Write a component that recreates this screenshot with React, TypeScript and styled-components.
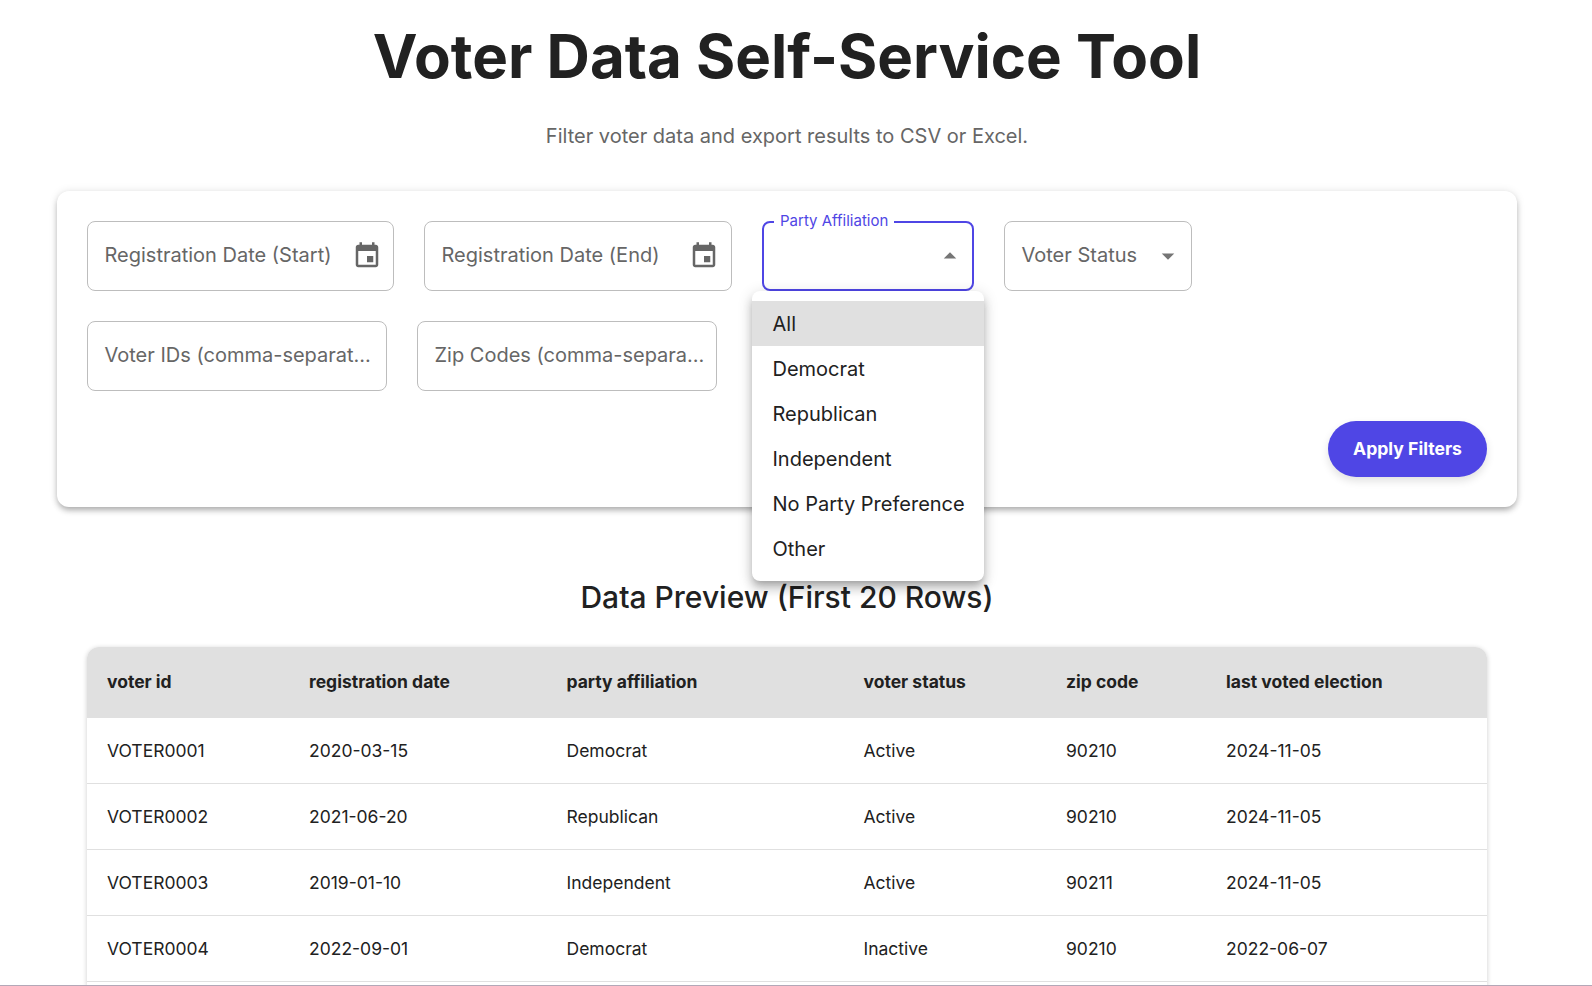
import * as React from 'react';
import styled, { createGlobalStyle } from 'styled-components';

const GlobalStyle = createGlobalStyle`
  html, body {
    margin: 0;
    height: 100%;
    overflow: hidden;
    background: #fff;
  }
  body {
    font-family: Inter, "Liberation Sans", sans-serif;
    color: #212121;
  }
`;

const Page = styled.div`
  width: 1574px;
  height: 986px;
  overflow: hidden;
  padding: 0 57px;
  box-sizing: border-box;
  display: flex;
  flex-direction: column;
`;

const Title = styled.h1`
  margin: 20px 0 0;
  font-size: 60px;
  line-height: 72px;
  font-weight: 700;
  text-align: center;
`;

const Subtitle = styled.p`
  margin: 30px 0 0;
  font-size: 20px;
  line-height: 28px;
  color: #666;
  text-align: center;
`;

const Card = styled.section`
  margin-top: 41px;
  padding: 30px;
  height: 316px;
  flex: none;
  box-sizing: border-box;
  background: #fff;
  border-radius: 12px;
  box-shadow: 0 4px 6px -1px rgba(0, 0, 0, 0.3), 0 0 8px rgba(0, 0, 0, 0.1);
  display: flex;
  flex-direction: column;
  justify-content: space-between;
`;

const Filters = styled.div`
  display: flex;
  flex-wrap: wrap;
  gap: 30px;
  width: 1150px;
`;

const Field = styled.div<{ $width: number; $focused?: boolean }>`
  position: relative;
  width: ${(p) => p.$width}px;
  height: 70px;
  box-sizing: border-box;
  padding: 0 ${(p) => (p.$focused ? 7 : 8)}px 2px 16.5px;
  display: flex;
  align-items: center;
  justify-content: space-between;
  border: ${(p) => (p.$focused ? '2px solid #4f46e5' : '1px solid #bdbdbd')};
  border-radius: 8px;
  font-size: 20px;
  color: #666;
  white-space: nowrap;

  svg {
    margin-top: 2px;
  }
`;

const DateField = styled(Field)<{ $iconInset: number }>`
  padding-right: ${(p) => p.$iconInset}px;
`;

const FloatingLabel = styled.span`
  position: absolute;
  left: 10px;
  top: -12px;
  padding: 0 6px;
  background: #fff;
  font-size: 15px;
  line-height: 20px;
  color: #4f46e5;
`;

const Menu = styled.ul`
  position: absolute;
  left: -12px;
  top: 68px;
  width: 232px;
  margin: 0;
  padding: 10px 0;
  list-style: none;
  background: #fff;
  border-radius: 8px;
  box-shadow: 0 5px 6px -3px rgba(0, 0, 0, 0.2), 0 8px 10px 1px rgba(0, 0, 0, 0.14), 0 3px 14px 2px rgba(0, 0, 0, 0.12);
  z-index: 5;
`;

const MenuItem = styled.li<{ $selected?: boolean }>`
  height: 45px;
  padding: 0 20.5px;
  display: flex;
  align-items: center;
  font-size: 20px;
  color: #212121;
  background: ${(p) => (p.$selected ? '#e0e0e0' : 'transparent')};
`;

const Actions = styled.div`
  display: flex;
  justify-content: flex-end;
`;

const ApplyButton = styled.button`
  height: 56px;
  width: 159px;
  padding: 0 0 2px;
  border: 0;
  border-radius: 28px;
  background: #4f46e5;
  color: #fff;
  font-family: inherit;
  font-size: 17.6px;
  font-weight: 700;
  box-shadow: 0 4px 8px rgba(0, 0, 0, 0.12);
`;

const SectionTitle = styled.h2`
  margin: 70px 0 0;
  font-size: 30px;
  line-height: 40px;
  font-weight: 500;
  text-align: center;
`;

const TableWrap = styled.div`
  flex: 1;
  margin: 30px 30px 0;
  background: #fff;
  border-radius: 12px 12px 0 0;
  overflow: hidden;
  box-shadow: 0 1px 5px rgba(0, 0, 0, 0.2);
`;

const Table = styled.table`
  width: 100%;
  border-collapse: collapse;
  table-layout: fixed;
`;

const HeadCell = styled.th`
  height: 71px;
  padding: 0 20px 2px;
  background: #e0e0e0;
  font-size: 17.5px;
  font-weight: 700;
  text-align: left;
  box-sizing: border-box;
`;

const Cell = styled.td`
  height: 65.8px;
  padding: 0 20px;
  font-size: 17.5px;
  border-bottom: 1px solid #e0e0e0;
  box-sizing: border-box;
`;

const BottomEdge = styled.div`
  position: fixed;
  left: 0;
  right: 0;
  bottom: 0;
  height: 1px;
  background: #b3a8b8;
`;

const CalendarIcon = () => (
  <svg width="30" height="30" viewBox="0 0 24 24" fill="#666">
    <path d="M17 12h-5v5h5v-5zM16 1v2H8V1H6v2H5c-1.11 0-1.99.9-1.99 2L3 19c0 1.1.89 2 2 2h14c1.1 0 2-.9 2-2V5c0-1.1-.9-2-2-2h-1V1h-2zm3 18H5V8h14v11z" />
  </svg>
);

const Caret = ({ up }: { up?: boolean }) => (
  <svg width="30" height="30" viewBox="0 0 24 24" fill="#757575">
    <path d={up ? 'M7 14l5-5 5 5z' : 'M7 10l5 5 5-5z'} />
  </svg>
);

const parties = ['All', 'Democrat', 'Republican', 'Independent', 'No Party Preference', 'Other'];

const columns = [
  { label: 'voter id', width: 202 },
  { label: 'registration date', width: 257.5 },
  { label: 'party affiliation', width: 297 },
  { label: 'voter status', width: 202.5 },
  { label: 'zip code', width: 160 },
  { label: 'last voted election', width: 281 },
];

const rows = [
  ['VOTER0001', '2020-03-15', 'Democrat', 'Active', '90210', '2024-11-05'],
  ['VOTER0002', '2021-06-20', 'Republican', 'Active', '90210', '2024-11-05'],
  ['VOTER0003', '2019-01-10', 'Independent', 'Active', '90211', '2024-11-05'],
  ['VOTER0004', '2022-09-01', 'Democrat', 'Inactive', '90210', '2022-06-07'],
];

export default function App() {
  return (
    <Page>
      <GlobalStyle />
      <Title>Voter Data Self-Service Tool</Title>
      <Subtitle>Filter voter data and export results to CSV or Excel.</Subtitle>
      <Card>
        <Filters>
          <DateField $width={307} $iconInset={11}>
            Registration Date (Start)
            <CalendarIcon />
          </DateField>
          <DateField $width={308} $iconInset={12}>
            Registration Date (End)
            <CalendarIcon />
          </DateField>
          <Field $width={212} $focused>
            <FloatingLabel>Party Affiliation</FloatingLabel>
            <span />
            <Caret up />
            <Menu>
              {parties.map((party, i) => (
                <MenuItem key={party} $selected={i === 0}>{party}</MenuItem>
              ))}
            </Menu>
          </Field>
          <Field $width={188}>
            Voter Status
            <Caret />
          </Field>
          <Field $width={300}>Voter IDs (comma-separat...</Field>
          <Field $width={300}>Zip Codes (comma-separa...</Field>
        </Filters>
        <Actions>
          <ApplyButton>Apply Filters</ApplyButton>
        </Actions>
      </Card>
      <SectionTitle>Data Preview (First 20 Rows)</SectionTitle>
      <TableWrap>
        <Table>
          <colgroup>
            {columns.map((c) => <col key={c.label} style={{ width: c.width }} />)}
          </colgroup>
          <thead>
            <tr>
              {columns.map((c) => <HeadCell key={c.label}>{c.label}</HeadCell>)}
            </tr>
          </thead>
          <tbody>
            {rows.map((row) => (
              <tr key={row[0]}>
                {row.map((value, i) => <Cell key={i}>{value}</Cell>)}
              </tr>
            ))}
          </tbody>
        </Table>
      </TableWrap>
      <BottomEdge />
    </Page>
  );
}
